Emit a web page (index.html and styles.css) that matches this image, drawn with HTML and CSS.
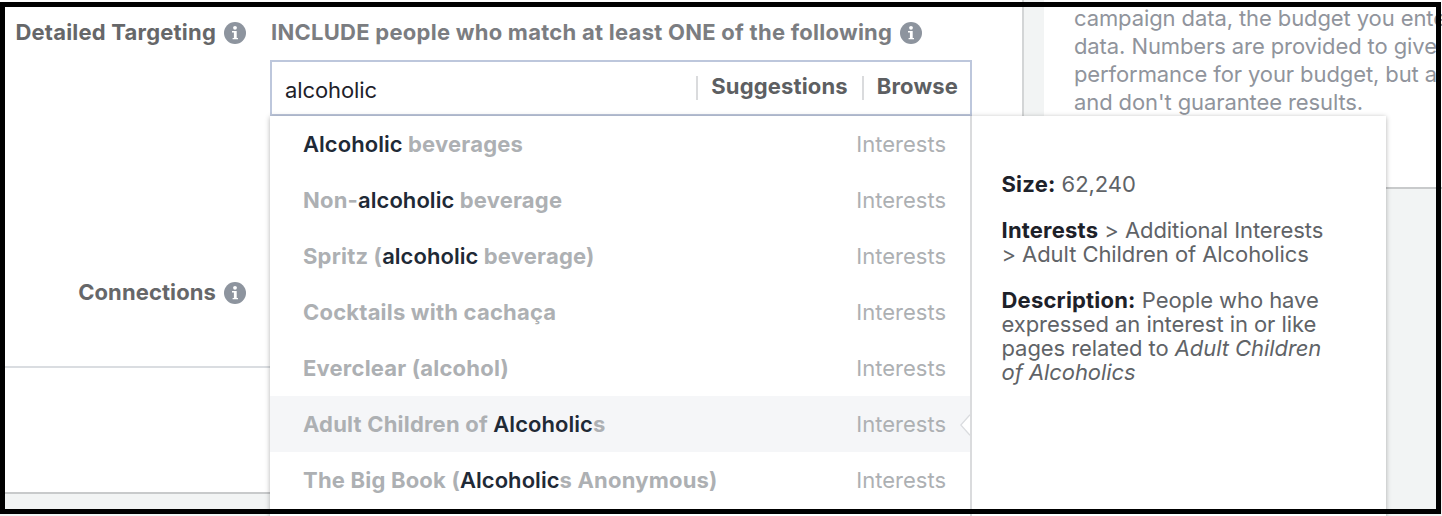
FILE: index.html
```html
<!DOCTYPE html>
<html lang="en">
<head>
    <meta charset="UTF-8">
    <meta name="viewport" content="width=device-width, initial-scale=1.0">
    <title>Detailed Targeting</title>
    <link rel="stylesheet" href="styles.css">
</head>
<body>
    <svg class="sprite" width="0" height="0">
        <symbol id="info" viewBox="0 0 22 22">
            <circle cx="11" cy="11" r="11" fill="#8d949e"/>
            <circle cx="11" cy="5.8" r="1.9" fill="#fff"/>
            <path d="M8 9h4.700v7H14v1.300H8.600V16h1.300v-5.400H8z" fill="#fff"/>
        </symbol>
    </svg>

    <div class="page">
        <main class="panel">
            <div class="row targeting">
                <div class="label"><span>Detailed Targeting</span> <svg class="info"><use href="#info"/></svg></div>
                <div class="field">
                    <div class="heading"><span>INCLUDE people who match at least ONE of the following</span> <svg class="info"><use href="#info"/></svg></div>
                    <div class="search">
                        <span class="query">alcoholic</span>
                        <span class="action suggestions">Suggestions</span>
                        <span class="action">Browse</span>
                        <div class="dropdown">
                            <ul class="results">
                                <li><b><em>Alcoholic</em> beverages</b><span>Interests</span></li>
                                <li><b>Non-<em>alcoholic</em> beverage</b><span>Interests</span></li>
                                <li><b>Spritz (<em>alcoholic</em> beverage)</b><span>Interests</span></li>
                                <li><b>Cocktails with cachaça</b><span>Interests</span></li>
                                <li><b>Everclear (alcohol)</b><span>Interests</span></li>
                                <li class="selected"><b>Adult Children of <em>Alcoholic</em>s</b><span>Interests</span>
                                    <svg class="arrow" viewBox="0 0 10 22"><path d="M10 .7L.8 11 10 21.300" fill="#fff" stroke="#dadcdf" stroke-width="1.3"/></svg>
                                </li>
                                <li><b>The Big Book (<em>Alcoholic</em>s Anonymous)</b><span>Interests</span></li>
                            </ul>
                            <div class="details">
                                <p><strong>Size:</strong> 62,240</p>
                                <p><strong>Interests</strong> &gt; Additional Interests<br>&gt; Adult Children of Alcoholics</p>
                                <p><strong>Description:</strong> People who have<br>expressed an interest in or like<br>pages related to <i>Adult Children<br>of Alcoholics</i></p>
                            </div>
                        </div>
                    </div>
                </div>
            </div>
            <div class="row connections">
                <div class="label"><span>Connections</span> <svg class="info"><use href="#info"/></svg></div>
            </div>
        </main>
        <aside class="estimate">
            <p>campaign data, the budget you ente<br>data. Numbers are provided to give<br>performance for your budget, but a<br>and don't guarantee results.</p>
        </aside>
    </div>
    <div class="frame"></div>
</body>
</html>
```

FILE: styles.css
```css
* { box-sizing: border-box; margin: 0; padding: 0; }
body { height: 516px; overflow: hidden; position: relative; background: #f2f4f4; font-family: Inter, "Liberation Sans", sans-serif; font-size: 22px; line-height: 24px; color: #606367; }
.sprite { position: absolute; }
.page { display: flex; align-items: flex-start; gap: 20px; height: 516px; overflow: hidden; }

.panel { flex: none; width: 1024px; height: 494px; background: #fff; border-right: 2px solid #d3d5d6; border-bottom: 2px solid #c8cacb; }
.row { display: grid; grid-template-columns: 246px 702px; column-gap: 24px; }
.targeting { height: 260px; padding-top: 20px; }
.connections { height: 108px; padding-top: 20px; border-bottom: 2px solid #dadde1; }
.label, .heading { display: flex; align-items: center; height: 26px; gap: 8px; font-weight: 700; white-space: nowrap; }
.label span, .heading span { padding-bottom: 2px; }
.label { justify-content: flex-end; letter-spacing: 0.2px; color: #666769; }
.connections .label { letter-spacing: 0.1px; }
.heading { padding-left: 1px; letter-spacing: 0.26px; color: #7b7d81; }
.info { flex: none; width: 22px; height: 22px; }

.search { position: relative; display: flex; align-items: center; margin-top: 14px; height: 56px; padding-left: 13px; border: 2px solid #bdc7dc; background: #fff; }
.query { flex: 1; padding-top: 4px; letter-spacing: -0.1px; color: #1d2129; }
.action { height: 24px; padding: 0 12px 0 13px; border-left: 2px solid #dadbdd; font-weight: 700; line-height: 21px; letter-spacing: 0.15px; color: #5d5f62; }
.suggestions { padding-right: 14px; }

.dropdown { position: absolute; top: 54px; left: -2px; display: flex; width: 1116px; height: 410px; background: #fff; box-shadow: 0 1px 5px rgba(0, 0, 0, 0.3); }
.results { width: 702px; list-style: none; border-right: 2px solid #dadbdd; }
.results li { position: relative; display: flex; justify-content: space-between; height: 56px; padding: 0 24px 0 33px; line-height: 56px; color: #adb0b3; }
.results b { font-weight: 700; letter-spacing: 0.2px; }
.results em { font-style: normal; font-weight: 600; letter-spacing: 0.05px; color: #1f2a36; }
.results .selected { background: #f5f6f8; }
.arrow { position: absolute; right: 0; top: 18px; width: 10px; height: 22px; }
.details { padding: 56px 0 0 29.5px; white-space: nowrap; letter-spacing: -0.07px; }
.details p { margin-bottom: 22px; }
.details strong { font-weight: 700; letter-spacing: 0.2px; color: #1d2129; }

.estimate { flex: 1; height: 189px; padding: 4px 0 0 30px; overflow: hidden; white-space: nowrap; background: #fff; border-bottom: 2px solid #c8cacb; line-height: 28px; letter-spacing: -0.1px; color: #90949c; }

.frame { position: absolute; top: 2px; left: 0; width: 1441px; height: 512px; border: 5px solid #000; pointer-events: none; }
```
